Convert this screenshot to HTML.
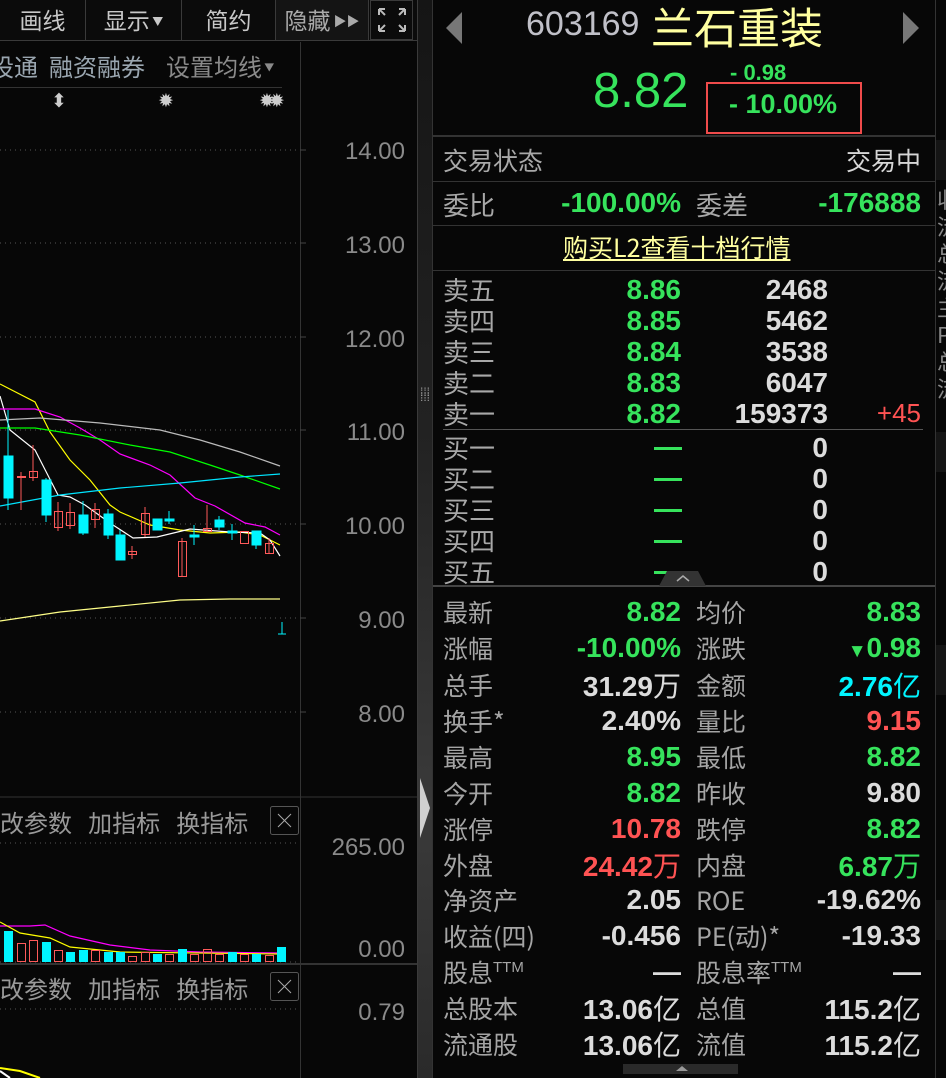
<!DOCTYPE html>
<html><head><meta charset="utf-8">
<style>
*{margin:0;padding:0;box-sizing:border-box}
body{width:946px;height:1078px;background:#070707;overflow:hidden;position:relative;font-family:"Liberation Sans","Noto Sans CJK SC",sans-serif;color:#a8a8a8}
.a{position:absolute;white-space:nowrap}
.cn{font-family:"Noto Sans CJK SC","Liberation Sans",sans-serif}
.g{color:#36e35c}.r{color:#ff5353}.w{color:#dcdcdc}.c{color:#00f5ff}
.b{font-weight:bold}
.lab{position:absolute;left:443px;font-size:25px;color:#a5a5a5;font-family:"Noto Sans CJK SC",sans-serif;line-height:36px;height:36px}
.v1{position:absolute;right:265px;font-size:28px;font-weight:bold;line-height:36px;height:36px;text-align:right}
.lab2{position:absolute;left:696px;font-size:25px;color:#a5a5a5;font-family:"Noto Sans CJK SC",sans-serif;line-height:36px;height:36px}
.v2{position:absolute;right:25px;font-size:28px;font-weight:bold;line-height:36px;height:36px;text-align:right}
.ob{position:absolute;font-size:28px;line-height:31px;height:31px}
.ob.cn{font-size:26px}
.tb{position:absolute;top:0;height:40px;line-height:38px;font-size:23px;color:#c8c8c8;text-align:center;font-family:"Noto Sans CJK SC",sans-serif;border-right:1px solid #3a3a3a}
.ax{position:absolute;right:541px;font-size:24px;color:#8a8a8a}
sup{font-size:15px;font-family:"Liberation Sans",sans-serif;position:relative;top:-10px;vertical-align:baseline;line-height:0}
</style></head><body>

<div class="a" style="left:0;top:0;width:417px;height:41px;background:#0b0b0b;border-bottom:1px solid #3a3a3a"></div>
<div class="tb" style="left:0;width:86px">画线</div>
<div class="tb" style="left:86px;width:96px">显示<span style="font-size:11px;vertical-align:4px"> ▼</span></div>
<div class="tb" style="left:182px;width:94px">简约</div>
<div class="tb" style="left:276px;width:93px;background:#141414;color:#aaa">隐藏<span style="font-size:13px;vertical-align:3px"> ▶▶</span></div>
<div class="tb" style="left:370px;width:43px;border:1px solid #3a3a3a;top:0;height:40px">
<svg width="34" height="30" viewBox="0 0 34 30" style="margin-top:4px" fill="none" stroke="#bbb" stroke-width="2"><path d="M4 4h6M4 4v6M4 4l6 6M30 4h-6M30 4v6M30 4l-6 6M4 26h6M4 26v-6M4 26l6-6M30 26h-6M30 26v-6M30 26l-6-6"/></svg></div>

<div class="a cn" style="left:-10px;top:48px;font-size:24px;color:#9aa6b0">设通</div>
<div class="a cn" style="left:49px;top:48px;font-size:24px;color:#9aa6b0">融资融券</div>
<div class="a cn" style="left:166px;top:48px;font-size:24px;color:#8a8a8a">设置均线<span style="font-size:10px;vertical-align:5px"> ▼</span></div>
<div class="a" style="left:0;top:87px;width:282px;height:1px;background:#333"></div>
<div class="a" style="left:300px;top:42px;width:1px;height:1036px;background:#333"></div>
<div class="a" style="left:417px;top:0;width:1px;height:1078px;background:#3a3a3a"></div>
<div class="a" style="left:418px;top:0;width:14px;height:1078px;background:linear-gradient(#151515,#222 40%,#3a3a3a 75%,#2a2a2a)"></div>
<div class="a" style="left:420px;top:390px;color:#999;font-size:12px;line-height:5px">⁞⁞⁞<br>⁞⁞⁞</div>
<svg class="a" style="left:419px;top:778px" width="12" height="60"><path d="M1 0L11 30L1 60Z" fill="#d0d0d0"/></svg>
<div class="a" style="left:432px;top:0;width:1px;height:1078px;background:#333"></div>

<div class="a" style="left:51px;top:90px;color:#ccc;font-size:19px">⬍</div>
<div class="a" style="left:158px;top:90px;color:#ccc;font-size:19px">✹</div>
<div class="a" style="left:259px;top:90px;color:#ccc;font-size:19px;letter-spacing:-6px">✹✹</div>

<svg class="a" style="left:0;top:0" width="417" height="1078">
<g stroke="#555" stroke-dasharray="1 4" stroke-width="1">
<line x1="0" y1="150" x2="298" y2="150"/><line x1="0" y1="243" x2="298" y2="243"/><line x1="0" y1="337" x2="298" y2="337"/><line x1="0" y1="430" x2="298" y2="430"/><line x1="0" y1="524" x2="298" y2="524"/><line x1="0" y1="618" x2="298" y2="618"/><line x1="0" y1="712" x2="298" y2="712"/>
<line x1="0" y1="843" x2="298" y2="843"/><line x1="0" y1="962" x2="298" y2="962"/><line x1="0" y1="1009" x2="298" y2="1009"/>
</g>
<g stroke="#444"><line x1="300" y1="150" x2="306" y2="150"/><line x1="300" y1="243" x2="306" y2="243"/><line x1="300" y1="337" x2="306" y2="337"/><line x1="300" y1="430" x2="306" y2="430"/><line x1="300" y1="524" x2="306" y2="524"/><line x1="300" y1="618" x2="306" y2="618"/><line x1="300" y1="712" x2="306" y2="712"/></g>
<line x1="0" y1="797" x2="417" y2="797" stroke="#333"/>
<line x1="0" y1="964" x2="417" y2="964" stroke="#333" stroke-width="2"/>
<g fill="none" stroke-width="1.2">
<polyline stroke="#ffff00" points="0,384 35,402 50,432 70,460 90,480 110,505 120,512 150,525 180,530 210,533 240,532 260,535 280,545"/>
<polyline stroke="#ffffff" points="0,396 10,430 35,450 58,495 70,497 85,505 110,523 133,538 157,537 190,529 230,532 260,533 270,540 280,556"/>
<polyline stroke="#ff00ff" points="0,409 35,409 60,417 80,428 100,440 120,454 150,465 170,475 195,498 215,506 245,523 265,527 280,535"/>
<polyline stroke="#bbbbbb" points="0,420 40,418 100,423 160,430 200,440 240,452 280,466"/>
<polyline stroke="#00ff00" points="0,428 35,428 80,435 130,445 170,452 210,465 240,475 280,489"/>
<polyline stroke="#00e5ff" points="0,506 60,495 120,488 180,483 240,477 280,474"/>
<polyline stroke="#ffff88" points="0,621 60,612 120,606 180,600 230,599 280,599"/>
<polyline stroke="#ff00ff" points="0,926 30,926 45,925 70,936 110,945 150,950 200,952 280,953"/>
<polyline stroke="#ffff00" points="0,922 20,933 50,938 70,947 120,952 280,954"/>
<polyline stroke="#ffff00" stroke-width="2" points="0,1068 20,1071 40,1078"/>
<polyline stroke="#ffffff" stroke-width="2" points="0,1071 10,1078"/>
</g>
<g stroke="#00f5ff" fill="#00f5ff">
<line x1="8" y1="410" x2="8" y2="510"/><rect x="4" y="456" width="9" height="42"/>
<line x1="46" y1="478" x2="46" y2="522"/><rect x="42" y="480" width="9" height="35"/>
<line x1="83" y1="501" x2="83" y2="535"/><rect x="79" y="515" width="9" height="18"/>
<line x1="108" y1="509" x2="108" y2="539"/><rect x="104" y="514" width="9" height="21"/>
<line x1="120" y1="530" x2="120" y2="560"/><rect x="116" y="535" width="9" height="25"/>
<rect x="153" y="519" width="9" height="11"/>
<line x1="169" y1="511" x2="169" y2="524"/><rect x="165" y="519" width="9" height="2"/>
<line x1="194" y1="525" x2="194" y2="545"/><rect x="190" y="535" width="9" height="2"/>
<line x1="219" y1="516" x2="219" y2="530"/><rect x="215" y="520" width="9" height="7"/>
<line x1="232" y1="524" x2="232" y2="540"/><rect x="228" y="531" width="9" height="2"/>
<line x1="256" y1="531" x2="256" y2="549"/><rect x="252" y="531" width="9" height="14"/>
<line x1="282" y1="622" x2="282" y2="634"/><line x1="278" y1="634" x2="286" y2="634"/>
</g>
<g stroke="#ff5a5a" fill="none">
<line x1="21" y1="472" x2="21" y2="510"/><line x1="17" y1="477" x2="26" y2="477" stroke-width="2"/>
<line x1="33" y1="445" x2="33" y2="481"/><rect x="29.5" y="471.5" width="8" height="6"/>
<line x1="58" y1="502" x2="58" y2="531"/><rect x="54.5" y="511.5" width="8" height="16"/>
<line x1="70" y1="503" x2="70" y2="529"/><rect x="66.5" y="512.5" width="8" height="13"/>
<line x1="95" y1="503" x2="95" y2="528"/><rect x="91.5" y="509.5" width="8" height="10"/>
<line x1="132" y1="546" x2="132" y2="559"/><rect x="128.5" y="551.5" width="8" height="3"/>
<line x1="145" y1="507" x2="145" y2="537"/><rect x="141.5" y="513.5" width="8" height="21"/>
<line x1="182" y1="538" x2="182" y2="576"/><rect x="178.5" y="541.5" width="8" height="35"/>
<line x1="207" y1="505" x2="207" y2="532"/><rect x="203.5" y="528.5" width="8" height="3"/>
<rect x="240.5" y="531.5" width="8" height="12"/>
<line x1="269" y1="538" x2="269" y2="553"/><rect x="265.5" y="543.5" width="8" height="10"/>
</g>
<g fill="#00f5ff">
<rect x="4" y="931" width="9" height="31"/><rect x="42" y="942" width="9" height="20"/><rect x="66" y="952" width="9" height="10"/><rect x="79" y="950" width="9" height="12"/><rect x="104" y="952" width="9" height="10"/><rect x="116" y="952" width="9" height="10"/><rect x="153" y="954" width="9" height="8"/><rect x="178" y="949" width="9" height="13"/><rect x="228" y="952" width="9" height="10"/><rect x="252" y="954" width="9" height="8"/><rect x="277" y="947" width="9" height="15"/>
</g>
<g fill="none" stroke="#ff5a5a">
<rect x="17.5" y="943.5" width="8" height="18"/><rect x="29.5" y="940.5" width="8" height="21"/><rect x="54.5" y="950.5" width="8" height="11"/><rect x="91.5" y="950.5" width="8" height="11"/><rect x="128.5" y="956.5" width="8" height="5"/><rect x="141.5" y="952.5" width="8" height="9"/><rect x="165.5" y="954.5" width="8" height="7"/><rect x="190.5" y="954.5" width="8" height="7"/><rect x="203.5" y="949.5" width="8" height="12"/><rect x="215.5" y="954.5" width="8" height="7"/><rect x="240.5" y="954.5" width="8" height="7"/><rect x="265.5" y="955.5" width="8" height="6"/>
</g>
<g fill="none" stroke="#555"><rect x="270.5" y="806.5" width="28" height="28" rx="2"/><rect x="270.5" y="972.5" width="28" height="28" rx="2"/></g>
<g stroke="#aaa"><path d="M278 814l13 13M291 814l-13 13M278 980l13 13M291 980l-13 13"/></g>
</svg>

<div class="ax" style="top:138px">14.00</div>
<div class="ax" style="top:232px">13.00</div>
<div class="ax" style="top:326px">12.00</div>
<div class="ax" style="top:419px">11.00</div>
<div class="ax" style="top:513px">10.00</div>
<div class="ax" style="top:607px">9.00</div>
<div class="ax" style="top:701px">8.00</div>
<div class="ax" style="top:834px">265.00</div>
<div class="ax" style="top:936px">0.00</div>
<div class="ax" style="top:999px">0.79</div>
<div class="a cn" style="left:0;top:804px;font-size:24px;color:#999">改参数&nbsp;&nbsp; 加指标&nbsp;&nbsp; 换指标</div>
<div class="a cn" style="left:0;top:970px;font-size:24px;color:#999">改参数&nbsp;&nbsp; 加指标&nbsp;&nbsp; 换指标</div>

<svg class="a" style="left:446px;top:12px" width="18" height="32"><path d="M16 0L0 16L16 32Z" fill="#777"/></svg>
<svg class="a" style="left:901px;top:12px" width="18" height="32"><path d="M2 0L18 16L2 32Z" fill="#777"/></svg>
<div class="a" style="left:526px;top:5px;font-size:34px;color:#c0c0c8">603169</div>
<div class="a cn" style="left:651px;top:-5px;font-size:43px;color:#ffffa0">兰石重装</div>
<div class="a g" style="left:593px;top:63px;font-size:49px">8.82</div>
<div class="a g b" style="left:730px;top:60px;font-size:22px">- 0.98</div>
<div class="a" style="left:706px;top:82px;width:156px;height:52px;border:2px solid #ef4b4b;background:#070707"></div>
<div class="a g b" style="left:729px;top:89px;font-size:27px">- 10.00%</div>
<div class="a" style="left:433px;top:135px;width:502px;height:2px;background:#333"></div>

<div class="a cn" style="left:443px;top:142px;font-size:25px">交易状态</div>
<div class="a cn" style="right:25px;top:142px;font-size:25px;color:#d6d6d6">交易中</div>
<div class="a" style="left:433px;top:181px;width:502px;height:1px;background:#333"></div>
<div class="a cn" style="left:443px;top:186px;font-size:26px">委比</div>
<div class="a g b" style="right:265px;top:187px;font-size:28px">-100.00%</div>
<div class="a cn" style="left:696px;top:186px;font-size:26px">委差</div>
<div class="a g b" style="right:25px;top:187px;font-size:28px">-176888</div>
<div class="a" style="left:433px;top:225px;width:502px;height:1px;background:#333"></div>
<div class="a cn" style="left:563px;top:229px;font-size:25px;color:#ffffa0;text-decoration:underline">购买L2查看十档行情</div>
<div class="a" style="left:433px;top:270px;width:502px;height:1px;background:#333"></div>

<div class="ob cn" style="left:443px;top:274px">卖五</div><div class="ob g b" style="right:265px;top:274px">8.86</div><div class="ob w b" style="right:118px;top:274px">2468</div>
<div class="ob cn" style="left:443px;top:305px">卖四</div><div class="ob g b" style="right:265px;top:305px">8.85</div><div class="ob w b" style="right:118px;top:305px">5462</div>
<div class="ob cn" style="left:443px;top:336px">卖三</div><div class="ob g b" style="right:265px;top:336px">8.84</div><div class="ob w b" style="right:118px;top:336px">3538</div>
<div class="ob cn" style="left:443px;top:367px">卖二</div><div class="ob g b" style="right:265px;top:367px">8.83</div><div class="ob w b" style="right:118px;top:367px">6047</div>
<div class="ob cn" style="left:443px;top:398px">卖一</div><div class="ob g b" style="right:265px;top:398px">8.82</div><div class="ob w b" style="right:118px;top:398px">159373</div><div class="ob r" style="right:25px;top:398px;font-size:26px">+45</div>
<div class="a" style="left:443px;top:429px;width:480px;height:1px;background:#555"></div>
<div class="ob cn" style="left:443px;top:432px">买一</div><div class="ob w b" style="right:118px;top:432px">0</div>
<div class="ob cn" style="left:443px;top:463px">买二</div><div class="ob w b" style="right:118px;top:463px">0</div>
<div class="ob cn" style="left:443px;top:494px">买三</div><div class="ob w b" style="right:118px;top:494px">0</div>
<div class="ob cn" style="left:443px;top:525px">买四</div><div class="ob w b" style="right:118px;top:525px">0</div>
<div class="ob cn" style="left:443px;top:556px">买五</div><div class="ob w b" style="right:118px;top:556px">0</div>
<div class="a" style="left:654px;top:447px;width:28px;height:3px;background:#36e35c"></div>
<div class="a" style="left:654px;top:478px;width:28px;height:3px;background:#36e35c"></div>
<div class="a" style="left:654px;top:509px;width:28px;height:3px;background:#36e35c"></div>
<div class="a" style="left:654px;top:540px;width:28px;height:3px;background:#36e35c"></div>
<div class="a" style="left:654px;top:571px;width:28px;height:3px;background:#36e35c"></div>
<div class="a" style="left:433px;top:585px;width:502px;height:2px;background:#444"></div>
<svg class="a" style="left:658px;top:571px" width="50" height="15"><path d="M9 0H40L48 15H1Z" fill="#333"/><path d="M19 10L25 5L31 10" stroke="#aaa" fill="none" stroke-width="1.5"/></svg>

<div class="lab" style="top:594px">最新</div><div class="v1 g" style="top:594px">8.82</div><div class="lab2" style="top:594px">均价</div><div class="v2 g" style="top:594px">8.83</div>
<div class="lab" style="top:630px">涨幅</div><div class="v1 g" style="top:630px">-10.00%</div><div class="lab2" style="top:630px">涨跌</div><div class="v2 g" style="top:630px"><span style="font-size:19px">▼</span>0.98</div>
<div class="lab" style="top:667px">总手</div><div class="v1 w" style="top:667px">31.29<span class="cn" style="font-weight:normal">万</span></div><div class="lab2" style="top:667px">金额</div><div class="v2 c" style="top:667px">2.76<span class="cn" style="font-weight:normal">亿</span></div>
<div class="lab" style="top:703px">换手*</div><div class="v1 w" style="top:703px">2.40%</div><div class="lab2" style="top:703px">量比</div><div class="v2 r" style="top:703px">9.15</div>
<div class="lab" style="top:739px">最高</div><div class="v1 g" style="top:739px">8.95</div><div class="lab2" style="top:739px">最低</div><div class="v2 g" style="top:739px">8.82</div>
<div class="lab" style="top:775px">今开</div><div class="v1 g" style="top:775px">8.82</div><div class="lab2" style="top:775px">昨收</div><div class="v2 w" style="top:775px">9.80</div>
<div class="lab" style="top:811px">涨停</div><div class="v1 r" style="top:811px">10.78</div><div class="lab2" style="top:811px">跌停</div><div class="v2 g" style="top:811px">8.82</div>
<div class="lab" style="top:847px">外盘</div><div class="v1 r" style="top:847px">24.42<span class="cn" style="font-weight:normal">万</span></div><div class="lab2" style="top:847px">内盘</div><div class="v2 g" style="top:847px">6.87<span class="cn" style="font-weight:normal">万</span></div>
<div class="lab" style="top:882px">净资产</div><div class="v1 w" style="top:882px">2.05</div><div class="lab2" style="top:882px">ROE</div><div class="v2 w" style="top:882px">-19.62%</div>
<div class="lab" style="top:918px">收益(四)</div><div class="v1 w" style="top:918px">-0.456</div><div class="lab2" style="top:918px">PE(动)*</div><div class="v2 w" style="top:918px">-19.33</div>
<div class="lab" style="top:954px">股息<sup>TTM</sup></div><div class="v1 w" style="top:954px">—</div><div class="lab2" style="top:954px">股息率<sup>TTM</sup></div><div class="v2 w" style="top:954px">—</div>
<div class="lab" style="top:990px">总股本</div><div class="v1 w" style="top:990px">13.06<span class="cn" style="font-weight:normal">亿</span></div><div class="lab2" style="top:990px">总值</div><div class="v2 w" style="top:990px">115.2<span class="cn" style="font-weight:normal">亿</span></div>
<div class="lab" style="top:1026px">流通股</div><div class="v1 w" style="top:1026px">13.06<span class="cn" style="font-weight:normal">亿</span></div><div class="lab2" style="top:1026px">流值</div><div class="v2 w" style="top:1026px">115.2<span class="cn" style="font-weight:normal">亿</span></div>
<div class="a" style="left:623px;top:1064px;width:115px;height:10px;background:#2a2a2a"></div>
<svg class="a" style="left:672px;top:1064px" width="20" height="8"><path d="M4 7L10 2L16 7Z" fill="#999"/></svg>

<div class="a" style="left:935px;top:0;width:1px;height:1078px;background:#333"></div>
<div class="a" style="left:936px;top:140px;width:10px;height:40px;background:#151515"></div>
<div class="a cn" style="left:937px;top:186px;font-size:22px;color:#888;line-height:27px;width:9px;overflow:hidden">收<br>流<br>总<br>流<br>主<br>P<br>总<br>流</div>
<div class="a" style="left:936px;top:432px;width:10px;height:40px;background:#151515"></div>
<div class="a" style="left:936px;top:645px;width:10px;height:50px;background:#151515"></div>
<div class="a" style="left:936px;top:900px;width:10px;height:40px;background:#151515"></div>
</body></html>
